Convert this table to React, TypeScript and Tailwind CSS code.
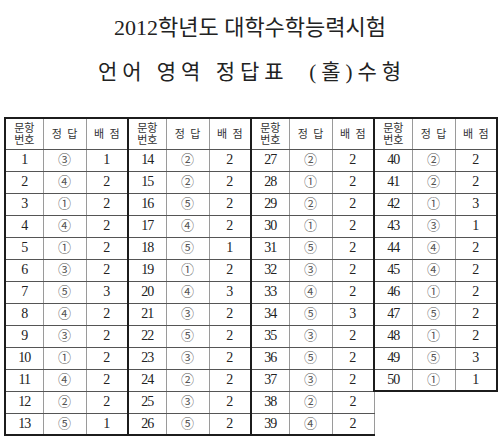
const groups: { start: number; answers: number[]; points: number[] }[] = [
  { start: 1, answers: [3, 4, 1, 4, 1, 3, 5, 4, 3, 1, 4, 2, 5], points: [1, 2, 2, 2, 2, 2, 3, 2, 2, 2, 2, 2, 1] },
  { start: 14, answers: [2, 2, 5, 4, 5, 1, 4, 3, 5, 3, 2, 3, 5], points: [2, 2, 2, 2, 1, 2, 3, 2, 2, 2, 2, 2, 2] },
  { start: 27, answers: [2, 1, 2, 1, 5, 3, 4, 5, 3, 5, 3, 2, 4], points: [2, 2, 2, 2, 2, 2, 2, 3, 2, 2, 2, 2, 2] },
  { start: 40, answers: [2, 2, 1, 3, 4, 4, 1, 5, 1, 5, 1], points: [2, 2, 3, 1, 2, 2, 2, 2, 2, 3, 1] },
]

const circled = ['', '①', '②', '③', '④', '⑤']
const ROWS = 13

function cellClass(g: number, c: number, lastRow: boolean, header: boolean) {
  const cls = ['border', 'border-x-[#9a9a9a]', 'border-y-[#555]']
  if (c === 0) cls.push('border-l-2', 'border-l-[#1c1c1c]')
  if (g === 3 && c === 2) cls.push('border-r-2', 'border-r-[#1c1c1c]')
  if (header) cls.push('border-t-2', 'border-t-[#1c1c1c]')
  if (lastRow) cls.push('border-b-2', 'border-b-[#1c1c1c]')
  return cls.join(' ')
}

export default function App() {
  return (
    <div
      className="w-[500px] h-[438px] bg-white text-[#222] overflow-hidden"
      style={{ fontFamily: '"Liberation Serif", "Noto Sans CJK KR", serif' }}
    >
      <div className="pt-[14px] text-center text-[22px] leading-[28px]">
        2012학년도 대학수학능력시험
      </div>
      <div className="mt-[16px] pl-[4px] text-center text-[21px] leading-[28px] tracking-[5px]">
        언어 영역 정답표 &nbsp;(홀)수형
      </div>

      <table className="mt-[31px] ml-[4px] w-[492px] table-fixed border-collapse">
        <colgroup>
          {groups.map((_, g) => [
            <col key={`a${g}`} className="w-[38px]" />,
            <col key={`b${g}`} className="w-[43px]" />,
            <col key={`c${g}`} className="w-[42px]" />,
          ])}
        </colgroup>
        <thead>
          <tr className="h-[31px]">
            {groups.map((_, g) => [
              <th key={`h1${g}`} className={cellClass(g, 0, false, true) + ' p-0 text-[11px] leading-[12px] font-normal text-[#333]'}>
                문항
                <br />
                번호
              </th>,
              <th key={`h2${g}`} className={cellClass(g, 1, false, true) + ' p-0 text-[11px] font-normal text-[#333] whitespace-nowrap'}>
                정&nbsp;&nbsp;답
              </th>,
              <th key={`h3${g}`} className={cellClass(g, 2, false, true) + ' p-0 text-[11px] font-normal text-[#333] whitespace-nowrap'}>
                배&nbsp;&nbsp;점
              </th>,
            ])}
          </tr>
        </thead>
        <tbody>
          {Array.from({ length: ROWS }).map((_, r) => (
            <tr key={r} className="h-[22px]">
              {groups.map((grp, g) => {
                if (r >= grp.answers.length) {
                  return [
                    <td key={`e1${g}`} className="p-0" />,
                    <td key={`e2${g}`} className="p-0" />,
                    <td key={`e3${g}`} className="p-0" />,
                  ]
                }
                const last = r === grp.answers.length - 1
                return [
                  <td key={`n${g}`} className={cellClass(g, 0, last, false) + ' p-0 text-center text-[14px] leading-[20px] tracking-[-1px]'}>
                    {grp.start + r}
                  </td>,
                  <td key={`a${g}`} className={cellClass(g, 1, last, false) + ' p-0 text-center text-[13px] leading-[20px] text-[#555]'}>
                    {circled[grp.answers[r]]}
                  </td>,
                  <td key={`p${g}`} className={cellClass(g, 2, last, false) + ' p-0 text-center text-[14px] leading-[20px]'}>
                    {grp.points[r]}
                  </td>,
                ]
              })}
            </tr>
          ))}
        </tbody>
      </table>
    </div>
  )
}
